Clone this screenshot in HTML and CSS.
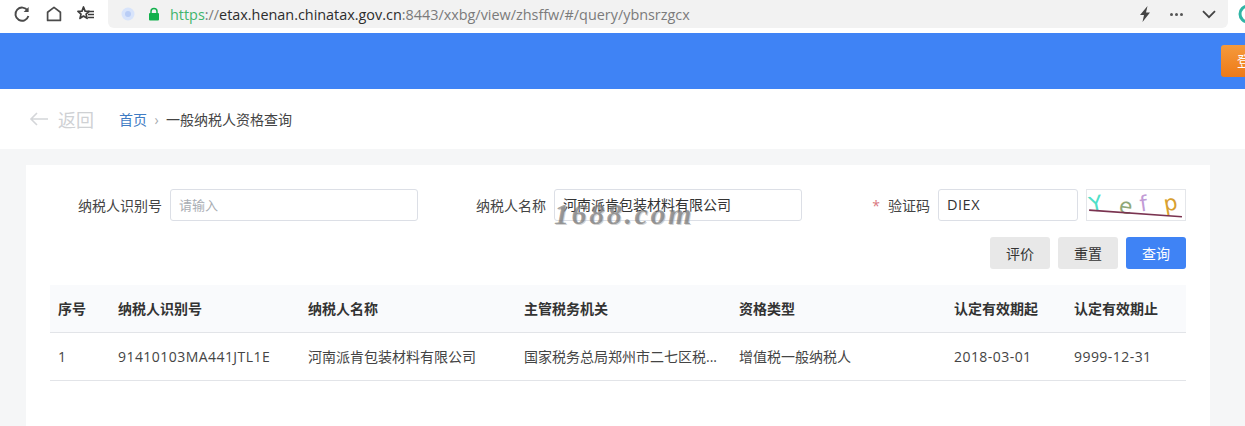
FILE: index.html
```html
<!DOCTYPE html>
<html lang="zh-CN">
<head>
<meta charset="utf-8">
<title>一般纳税人资格查询</title>
<link rel="stylesheet" href="styles.css">
</head>
<body>
<div class="toolbar">
  <div class="nav-icons">
    <svg class="tb-icon" viewBox="0 0 18 18"><path d="M14.6 5.6A6.6 6.6 0 1 0 15.4 11" fill="none" stroke="#4a4a4a" stroke-width="1.9"/><path d="M15.6 2v5h-5z" fill="#4a4a4a"/></svg>
    <svg class="tb-icon" viewBox="0 0 18 18"><path d="M2.6 15.4V7.2L9 2.4l6.4 4.8v8.2z" fill="none" stroke="#4a4a4a" stroke-width="1.7" stroke-linejoin="round"/></svg>
    <svg class="tb-icon" viewBox="0 0 18 18"><path d="M6.5 2l1.6 4.1 4 .3-3 2.7 1 4.3-3.6-2.4L3 13.4l1-4.3-3-2.7 4-.3z" fill="none" stroke="#3c3c3c" stroke-width="1.7" stroke-linejoin="round"/><path d="M11 6.5h6M11 9.5h6M11 12.5h6" stroke="#3c3c3c" stroke-width="1.5"/></svg>
  </div>
  <div class="address">
    <svg class="shield" viewBox="0 0 14 14"><circle cx="7" cy="7" r="6.5" fill="#d8e4fb"/><circle cx="7" cy="7" r="3" fill="#b9cdf6"/></svg>
    <svg class="lock" viewBox="0 0 12 14"><path d="M3 6.5V4.5a3 3 0 0 1 6 0v2" fill="none" stroke="#12b04c" stroke-width="1.5"/><rect x="1" y="6" width="10" height="7.5" rx="1" fill="#12b04c"/></svg>
    <div class="url"><span class="url-scheme">https</span><span class="url-dim">://</span><span class="url-host">etax.henan.chinatax.gov.cn</span><span class="url-dim">:8443/xxbg/view/zhsffw/#/query/ybnsrzgcx</span></div>
    <svg class="bolt" viewBox="0 0 14 16"><path d="M9.5 0L2 9h4l-1.5 7L12 6.5H8z" fill="#444"/></svg>
    <div class="dots"><i></i><i></i><i></i></div>
    <svg class="chev" viewBox="0 0 14 9"><path d="M1 1.2l6 6 6-6" fill="none" stroke="#444" stroke-width="1.8"/></svg>
  </div>
  <svg class="ext" viewBox="0 0 20 20"><circle cx="10" cy="10" r="8" fill="#fff" stroke="#2fb5a5" stroke-width="3"/><circle cx="14" cy="10" r="4" fill="#e8574f"/></svg>
</div>

<header class="bluebar"><div class="login">登录</div></header>

<div class="crumbbar">
  <div class="back"><svg class="back-arrow" viewBox="0 0 20 14"><path d="M19 7H2M8 1L2 7l6 6" fill="none" stroke="#d4d6d9" stroke-width="1.6"/></svg><span>返回</span></div>
  <nav class="crumbs"><span class="crumb-home">首页</span><span class="crumb-sep">›</span><span class="crumb-cur">一般纳税人资格查询</span></nav>
</div>

<main class="page">
  <section class="card">
    <form class="form">
      <div class="item"><label class="lbl">纳税人识别号</label><div class="input placeholder">请输入</div></div>
      <div class="item"><label class="lbl">纳税人名称</label><div class="input">河南派肯包装材料有限公司</div></div>
      <div class="item"><label class="lbl"><span class="req">*</span>验证码</label><div class="input code">DIEX</div>
        <svg class="captcha" viewBox="0 0 100 32">
          <text class="cap-y" transform="translate(2 24) rotate(-12)">Y</text>
          <text class="cap-e" transform="translate(31 24) rotate(8)">e</text>
          <text class="cap-f" transform="translate(55 23) rotate(-8)">f</text>
          <text class="cap-p" transform="translate(81 23) rotate(-10)">p</text>
          <path d="M0 21.5L99 28.5" stroke="#7a3350" stroke-width="1.8"/>
        </svg>
      </div>
    </form>
    <div class="actions">
      <button class="btn" type="button">评价</button>
      <button class="btn" type="button">重置</button>
      <button class="btn primary" type="button">查询</button>
    </div>
    <table class="table">
      <colgroup><col class="c1"><col class="c2"><col class="c3"><col class="c4"><col class="c5"><col class="c6"><col class="c7"></colgroup>
      <thead><tr><th>序号</th><th>纳税人识别号</th><th>纳税人名称</th><th>主管税务机关</th><th>资格类型</th><th>认定有效期起</th><th>认定有效期止</th></tr></thead>
      <tbody><tr><td>1</td><td class="num">91410103MA441JTL1E</td><td>河南派肯包装材料有限公司</td><td>国家税务总局郑州市二七区税...</td><td>增值税一般纳税人</td><td class="num">2018-03-01</td><td class="num">9999-12-31</td></tr></tbody>
    </table>
  </section>
</main>
<div class="watermark">1688.com</div>
</body>
</html>
```
FILE: styles.css
```css
* { box-sizing: border-box; }
html, body { margin: 0; height: 426px; overflow: hidden; }
body { background: #f5f6f7; font-family: "Open Sans", "Noto Sans CJK SC", sans-serif; font-size: 14px; color: #333; position: relative; }

.toolbar { height: 33px; background: #fff; display: flex; align-items: flex-start; padding-left: 13px; overflow: hidden; }
.nav-icons { display: flex; gap: 14px; height: 28px; align-items: center; width: 95px; flex: none; }
.tb-icon { width: 18px; height: 18px; flex: none; }
.address { width: 1120px; height: 28px; flex: none; background: #f2f2f2; border-radius: 0 0 6px 6px; display: flex; align-items: center; padding-left: 13px; }
.shield { width: 14px; height: 14px; flex: none; }
.lock { width: 12px; height: 14px; margin-left: 13px; flex: none; }
.url { margin-left: 10px; font-size: 14.4px; white-space: nowrap; width: 968px; flex: none; }
.url-scheme { color: #3fb56c; }
.url-dim { color: #7b7b7b; }
.url-host { color: #2d2d2d; }
.bolt { width: 14px; height: 16px; flex: none; }
.dots { display: flex; gap: 2px; margin-left: 18px; }
.dots i { width: 3px; height: 3px; background: #555; border-radius: 50%; }
.chev { width: 14px; height: 9px; margin-left: 19px; flex: none; }
.ext { width: 20px; height: 20px; margin: 4px 0 0 10px; flex: none; }

.bluebar { height: 56px; background: #3f83f5; display: flex; justify-content: flex-end; align-items: center; overflow: hidden; }
.login { width: 24px; height: 32px; flex: none; background: linear-gradient(#f59a3c, #ee7a17); color: #fff; line-height: 32px; padding-left: 16px; border-radius: 3px 0 0 3px; white-space: nowrap; overflow: hidden; }

.crumbbar { height: 60px; background: #fff; display: flex; align-items: center; padding-left: 29px; }
.back { display: flex; align-items: center; gap: 9px; font-size: 18px; color: #cfd1d4; width: 90px; }
.back-arrow { width: 20px; height: 14px; }
.crumbs { display: flex; align-items: center; font-size: 14px; }
.crumb-home { color: #3f7cc4; }
.crumb-sep { color: #a8abb0; width: 19px; text-align: center; }
.crumb-cur { color: #444; }

.page { padding: 16px 35px 0 26px; }
.card { background: #fff; padding: 24px 24px 0; height: 261px; }
.form { display: grid; grid-template-columns: repeat(3, 368px); gap: 16px; }
.item { display: flex; justify-content: flex-end; align-items: center; height: 32px; }
.lbl { margin-right: 8px; color: #444; white-space: nowrap; }
.req { color: #d9777f; margin-right: 8px; }
.input { width: 248px; height: 32px; border: 1px solid #dcdfe6; border-radius: 3px; background: #fff; padding-left: 8px; line-height: 30px; color: #333; }
.placeholder { color: #a9adb3; font-size: 13px; }
.code { width: 140px; font-size: 14.5px; letter-spacing: .5px; }
.captcha { width: 100px; height: 32px; margin-left: 8px; border: 1px solid #e4e6ea; flex: none; background: #fff; font-family: "DejaVu Sans", sans-serif; font-size: 23px; }
.cap-y { fill: #4fe0c8; }
.cap-e { fill: #8fa878; }
.cap-f { fill: #c29bd6; }
.cap-p { fill: #d8a030; }

.actions { display: flex; justify-content: flex-end; gap: 8px; margin-top: 16px; }
.btn { width: 60px; height: 32px; border: 0; border-radius: 3px; background: #e8e8e8; color: #333; font: inherit; padding: 0; }
.btn.primary { background: #3f83f5; color: #fff; }

.table { width: 1136px; margin-top: 16px; border-collapse: collapse; table-layout: fixed; }
.c1 { width: 60px; } .c2 { width: 190px; } .c3 { width: 216px; } .c4 { width: 215px; } .c5 { width: 215px; } .c6 { width: 120px; } .c7 { width: 120px; }
.table th { height: 47px; background: #f9fafc; border-bottom: 1px solid #e2e4e8; text-align: left; padding: 0 8px; font-weight: 700; color: #333; }
.table td { height: 48px; border-bottom: 1px solid #e2e4e8; padding: 0 8px; color: #444; white-space: nowrap; overflow: hidden; }
.table td.num { letter-spacing: .45px; }

.watermark { position: absolute; left: 554px; top: 197px; font-family: "Liberation Serif", serif; font-style: italic; font-weight: 700; font-size: 30px; letter-spacing: 2.6px; color: rgba(110,110,110,.65); text-shadow: 1px 1px 0 rgba(180,180,180,.6); }
```
